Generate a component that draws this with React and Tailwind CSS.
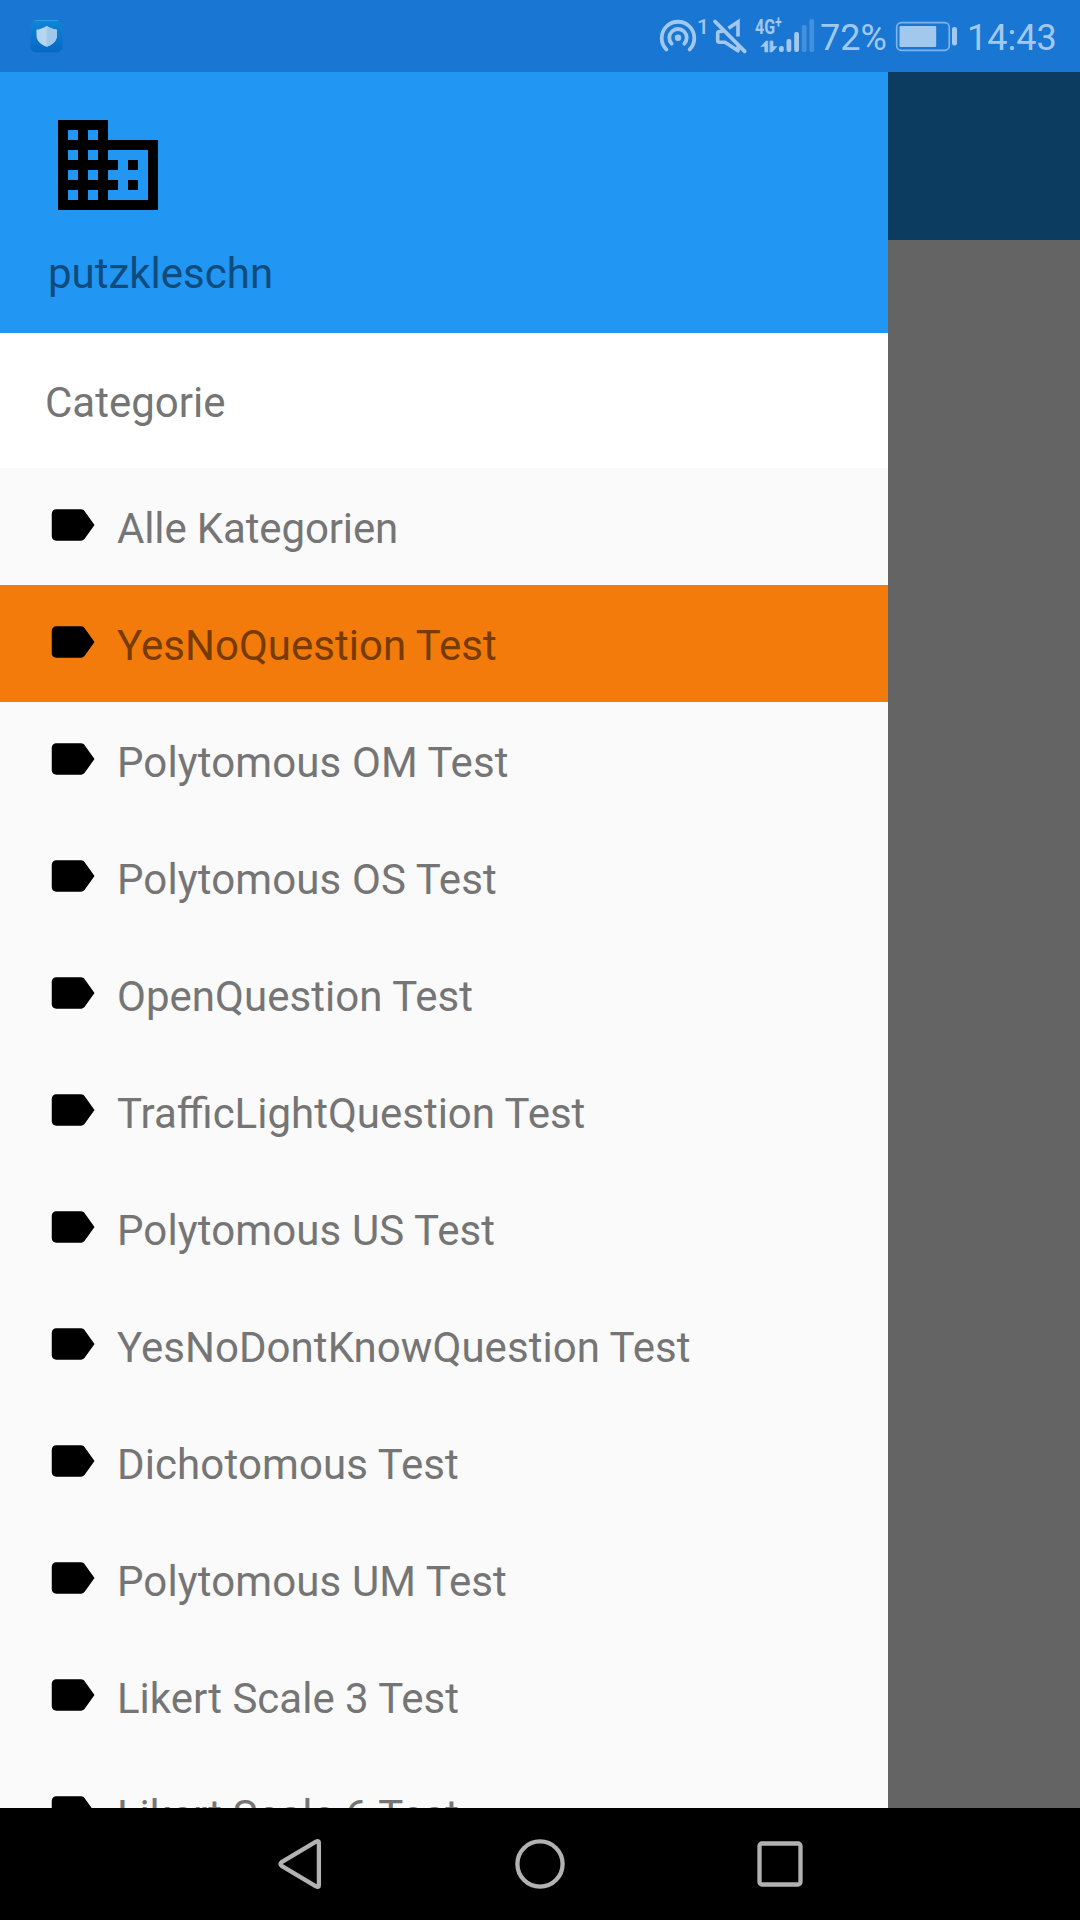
const CATEGORIES = [
  { name: 'Alle Kategorien', tracking: 'tracking-[-0.14px]' },
  { name: 'YesNoQuestion Test', tracking: 'tracking-[0.03px]' },
  { name: 'Polytomous OM Test', tracking: 'tracking-[0.12px]' },
  { name: 'Polytomous OS Test', tracking: 'tracking-[0.12px]' },
  { name: 'OpenQuestion Test', tracking: 'tracking-[0.04px]' },
  { name: 'TrafficLightQuestion Test', tracking: 'tracking-normal' },
  { name: 'Polytomous US Test', tracking: 'tracking-[0.12px]' },
  { name: 'YesNoDontKnowQuestion Test', tracking: 'tracking-[0.05px]' },
  { name: 'Dichotomous Test', tracking: 'tracking-[0.12px]' },
  { name: 'Polytomous UM Test', tracking: 'tracking-[0.12px]' },
  { name: 'Likert Scale 3 Test', tracking: 'tracking-normal' },
  { name: 'Likert Scale 6 Test', tracking: 'tracking-normal' },
];

const SELECTED = 'YesNoQuestion Test';

function ShieldBadge() {
  return (
    <svg className="h-[36px] w-[36px] shrink-0" viewBox="28 18 36 36">
      <defs>
        <linearGradient id="badge" x1="0" y1="0" x2="0" y2="1">
          <stop offset="0" stopColor="#1085d6" />
          <stop offset="1" stopColor="#0568c4" />
        </linearGradient>
      </defs>
      <rect x="30.5" y="20.5" width="32" height="32" rx="6" fill="url(#badge)" />
      <path d="M34.500 20.500H58.500" stroke="#2f9be6" strokeWidth="1" />
      <path d="M46.700 26c3 2 6 3 10.200 3.800v6c0 5-4.500 9-10.200 11-5.700-2-10.200-6-10.200-11v-6c4.200-.8 7.200-1.800 10.200-3.800z" fill="#b5d5f1" />
      <path d="M46.700 26c3 2 6 3 10.200 3.800v6c0 5-4.500 9-10.200 11z" fill="#a0c8ec" />
    </svg>
  );
}

function StatusIcons() {
  return (
    <svg className="h-[72px] w-[160px] shrink-0" viewBox="658 0 160 72" fill="none" stroke="#a3c8ee" strokeLinecap="round">
      {/* hotspot */}
      <path d="M666.400 49.500A16.300 16.300 0 1 1 689.600 49.500" strokeWidth="3.800" />
      <path d="M671.700 43.700A8.700 8.700 0 1 1 684.300 43.700" strokeWidth="3.800" />
      <circle cx="678" cy="37.800" r="3.200" fill="#a3c8ee" stroke="none" />
      <text x="697" y="34" fontFamily="Roboto, sans-serif" fontWeight="500" fontSize="21" fill="#a3c8ee" stroke="none">1</text>
      {/* muted speaker */}
      <path d="M715 21.500L744.700 51.300" strokeWidth="3.800" />
      <path d="M722 31.500H719.500q-1.800 0-1.800 1.800v7.200q0 1.800 1.800 1.800h5.500L738 50.800V47" strokeWidth="3.600" strokeLinejoin="round" />
      <path d="M728.500 28.300L738 21.800V36.500" strokeWidth="3.600" strokeLinecap="butt" />
      {/* network type and data arrows */}
      <text y="34" fontFamily="Roboto, sans-serif" fontWeight="700" fontSize="20.500" fill="#a3c8ee" stroke="none" transform="translate(755 0) scale(0.78 1)">
        4G<tspan dy="-6" fontSize="16">+</tspan>
      </text>
      <path d="M761 46.500L766 41h1.800V52h-3V46.500zM770.200 41h2.800V46.500H777L772 52h-1.800z" fill="#a3c8ee" stroke="#a3c8ee" strokeWidth="0.600" />
      {/* signal strength */}
      <g stroke="none" fill="#a3c8ee">
        <rect x="779" y="46" width="4.800" height="6" rx="2" />
        <rect x="786.500" y="39" width="4.800" height="13" rx="2" />
        <rect x="794.200" y="32" width="4.800" height="20" rx="2" />
        <rect x="801.800" y="25" width="4.800" height="27" rx="2" fill="#4391dd" />
        <rect x="809.400" y="19" width="4.800" height="33" rx="2" fill="#4391dd" />
      </g>
    </svg>
  );
}

function Battery() {
  return (
    <svg className="h-[72px] w-[64px] shrink-0" viewBox="895 0 64 72">
      <rect x="896.700" y="22.700" width="52.600" height="27.600" rx="4.500" fill="none" stroke="#7fb4e8" strokeWidth="1.700" />
      <rect x="899.500" y="26" width="36.700" height="21" rx="1" fill="#a3c8ee" />
      <rect x="952" y="27" width="5" height="18.500" rx="2.200" fill="#a3c8ee" />
    </svg>
  );
}

function StatusBar() {
  return (
    <header className="flex h-[72px] shrink-0 items-center bg-[#1976d2] pl-[28px] text-[36px] leading-[72px] text-[#a3c8ee]">
      <ShieldBadge />
      <div className="ml-[594px] flex h-[72px] items-start">
        <StatusIcons />
        <span className="w-[77px] whitespace-nowrap pl-[2px] pt-[2px]">72%</span>
        <Battery />
        <span className="whitespace-nowrap pl-[8px] pt-[2px]">14:43</span>
      </div>
    </header>
  );
}

function BusinessIcon() {
  return (
    <svg className="ml-[48px] mt-[33px] h-[120px] w-[120px] shrink-0" viewBox="0 0 24 24">
      <path d="M12 7V3H2v18h20V7H12zM6 19H4v-2h2v2zm0-4H4v-2h2v2zm0-4H4V9h2v2zm0-4H4V5h2v2zm4 12H8v-2h2v2zm0-4H8v-2h2v2zm0-4H8V9h2v2zm0-4H8V5h2v2zm10 12h-8v-2h2v-2h-2v-2h2v-2h-2V9h8v10zm-2-8h-2v2h2v-2zm0 4h-2v2h2v-2z" />
    </svg>
  );
}

function LabelIcon() {
  return (
    <svg className="mt-[30px] h-[54px] w-[54px] shrink-0" viewBox="0 0 24 24">
      <path d="M17.630 5.840C17.270 5.330 16.670 5 16 5L5 5.010C3.900 5.010 3 5.900 3 7v10c0 1.100.9 1.990 2 1.990L16 19c.67 0 1.270-.33 1.630-.84L22 12l-4.370-6.160z" />
    </svg>
  );
}

function CategoryRow({ name, tracking, selected }) {
  return (
    <li className={`flex h-[117px] shrink-0 pl-[45px] ${selected ? 'bg-[#f27b0b] text-[#773b01]' : 'text-[#757575]'}`}>
      <LabelIcon />
      <span className={`ml-[18px] mt-[36px] whitespace-nowrap leading-[50px] ${tracking}`}>{name}</span>
    </li>
  );
}

function NavBar() {
  return (
    <nav className="flex h-[112px] shrink-0 items-center justify-center gap-[180px] bg-black">
      <svg className="h-[60px] w-[60px]" viewBox="270 1834 60 60" fill="none" stroke="#b2b2b2" strokeWidth="4.300" strokeLinejoin="round">
        <path d="M316 1841.600q2.900-1.500 2.900 1.200v42.400q0 2.700-2.900 1.200L281.600 1865.800q-2.200-1.800 0-3.600z" />
      </svg>
      <svg className="h-[60px] w-[60px]" viewBox="0 0 60 60" fill="none" stroke="#b2b2b2" strokeWidth="4.300">
        <circle cx="30" cy="30" r="22.600" />
      </svg>
      <svg className="h-[60px] w-[60px]" viewBox="0 0 60 60" fill="none" stroke="#b2b2b2" strokeWidth="4.300">
        <rect x="9.500" y="9.500" width="41" height="41" rx="2.500" />
      </svg>
    </nav>
  );
}

export default function App() {
  return (
    <div className="flex h-[1920px] w-[1080px] flex-col overflow-hidden font-['Roboto',sans-serif]">
      <StatusBar />
      <main className="flex h-[1736px] shrink-0 overflow-hidden">
        <aside className="flex w-[888px] shrink-0 flex-col overflow-hidden bg-[#fafafa] text-[42px]">
          <div className="flex h-[261px] shrink-0 flex-col bg-[#2196f3]">
            <BusinessIcon />
            <span className="ml-[48px] mt-[24px] leading-[50px] text-[#0f4c7d]">putzkleschn</span>
          </div>
          <h2 className="h-[135px] shrink-0 bg-white pl-[45px] pt-[45px] leading-[50px] text-[#757575]">Categorie</h2>
          <ul className="flex flex-col">
            {CATEGORIES.map(({ name, tracking }) => (
              <CategoryRow key={name} name={name} tracking={tracking} selected={name === SELECTED} />
            ))}
          </ul>
        </aside>
        <div className="flex grow flex-col">
          <div className="h-[168px] bg-[#0d3c61]" />
          <div className="grow bg-[#646464]" />
        </div>
      </main>
      <NavBar />
    </div>
  );
}
